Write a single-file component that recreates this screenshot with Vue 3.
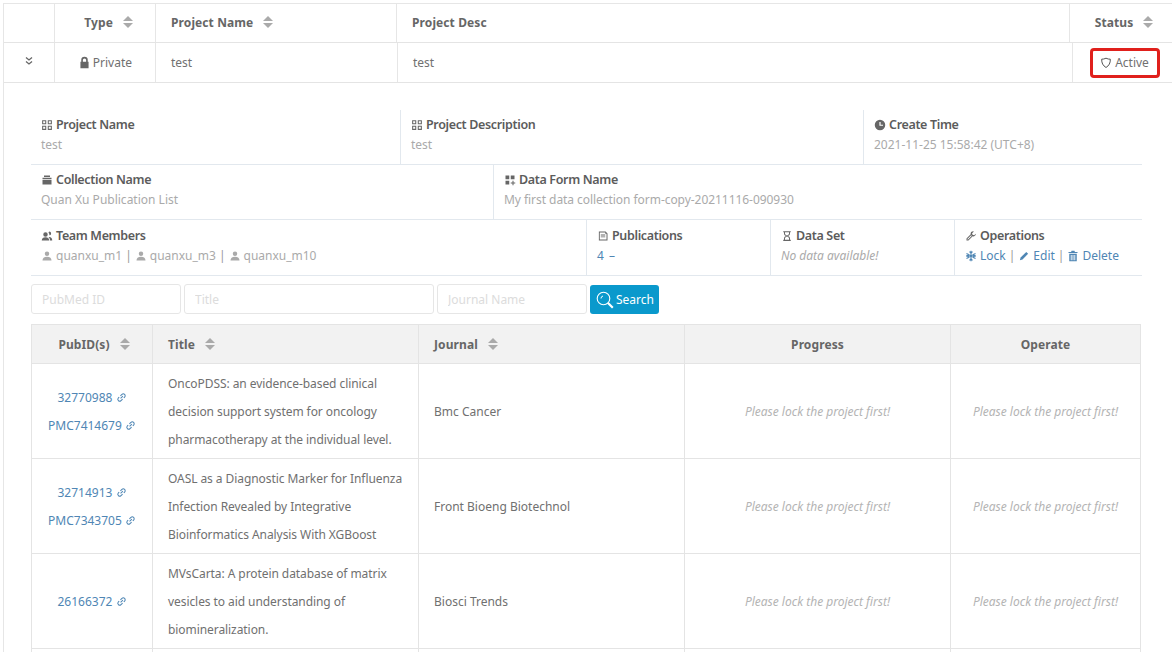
<script setup>
const icons = {
  lock: 'M4 7V5a4 4 0 0 1 8 0v2h1v8H3V7h1zm2 0h4V5a2 2 0 0 0-4 0v2z',
  grid: 'M1.500 1.500h5.500V7H1.500V1.500zm1.400 1.400v2.700h2.700V2.900H2.900zM9 1.500h5.500V7H9V1.500zm1.400 1.400v2.700h2.700V2.900h-2.700zM1.500 9H7v5.500H1.500V9zm1.400 1.400v2.700h2.700v-2.700H2.900zM9 9h5.500v5.500H9V9zm1.400 1.400v2.700h2.700v-2.700h-2.700z',
  clock: 'M8 1a7 7 0 1 1 0 14A7 7 0 0 1 8 1zM7.200 4v5H12V7.600H8.800V4H7.200z',
  box: 'M4 2h8v2H4V2zM2 5h12v2H2V5zm0 3h12v6H2V8z',
  form: 'M2 2h5v5H2V2zm7 0h5v5H9V2zM2 9h5v5H2V9zm9.300 0h1.400v2.300H15v1.400h-2.300V15h-1.400v-2.300H9v-1.400h2.300V9z',
  team: 'M6 3a3 3 0 0 1 3 3 3 3 0 0 1-6 0 3 3 0 0 1 3-3zm5-1a2.500 2.500 0 0 1 0 5 3 3 0 0 0-1-3.500A2.500 2.500 0 0 1 11 2zM1 14c0-3 2-4.500 5-4.500S11 11 11 14H1zm11 0c0-2-.7-3.500-2-4.700 3-.5 5 1 5 4.700h-3z',
  user: 'M8 2a3 3 0 0 1 3 3 3 3 0 0 1-6 0 3 3 0 0 1 3-3zM2 14c0-3 2-5 6-5s6 2 6 5H2z',
  book: 'M2.500 2h9L14 4.500V14H2.500V2zm1.200 1.200v9.600h9V5H11V3.200H3.700zM5 6h6v1.200H5V6zm0 2.500h6v1.200H5V8.500z',
  glass: 'M3 1.500h10V3h-1v2c0 1.500-1.500 2.400-2.500 3C10.500 8.600 12 9.500 12 11v2h1v1.500H3V13h1v-2c0-1.500 1.500-2.400 2.500-3C5.500 7.400 4 6.500 4 5V3H3V1.500zM5.300 3v2c0 .8 1.700 2 2.700 2.300 1-.3 2.700-1.500 2.700-2.300V3H5.300zM8 8.700c-1 .3-2.700 1.500-2.700 2.300v2h5.400v-2c0-.8-1.700-2-2.700-2.300z',
  wrench: 'M11 1.500a3.500 3.500 0 0 0-3.400 4.300L2 11.400V14h2.600l5.600-5.600A3.500 3.500 0 0 0 14.500 5l-2.300 2-2.200-.6-.6-2.200 2.300-1.900c-.2-.5-.5-.8-.7-.8zM3.200 11.900l5-5 .9.900-5 5H3.200v-.9z',
  pen: 'M11 2.500l2.500 2.500-7.500 7.500L2.500 13.500l1-3.500L11 2.500z',
  trash: 'M6 1h4l.5 1.500H14V4H2V2.500h3.500L6 1zM3 5h10v10H3V5zm2 1.500V13.500h1.200V6.500H5zm2.400 0V13.500h1.200V6.500H7.400zm2.400 0V13.500H11V6.500H9.800z',
}
const members = ['quanxu_m1', 'quanxu_m3', 'quanxu_m10']
const rows = [
  { ids: ['32770988', 'PMC7414679'], title: ['OncoPDSS: an evidence-based clinical', 'decision support system for oncology', 'pharmacotherapy at the individual level.'], journal: 'Bmc Cancer' },
  { ids: ['32714913', 'PMC7343705'], title: ['OASL as a Diagnostic Marker for Influenza', 'Infection Revealed by Integrative', 'Bioinformatics Analysis With XGBoost'], journal: 'Front Bioeng Biotechnol' },
  { ids: ['26166372'], title: ['MVsCarta: A protein database of matrix', 'vesicles to aid understanding of', 'biomineralization.'], journal: 'Biosci Trends' },
]
</script>

<template>
  <div class="page">
    <div class="outer">
      <div class="head">
        <div class="hc"></div>
        <div class="hc end"><span>Type</span><i class="sort"></i></div>
        <div class="hc"><span>Project Name</span><i class="sort"></i></div>
        <div class="hc"><span>Project Desc</span></div>
        <div class="hc center status"><span>Status</span><i class="sort"></i></div>
      </div>
      <div class="prow">
        <div class="pc center">
          <svg class="chev" viewBox="0 0 10 10"><path d="M2 1.500l3 2.500 3-2.500M2 5.500l3 2.500 3-2.500" fill="none" stroke="#666" stroke-width="1.300" /></svg>
        </div>
        <div class="pc end"><svg class="ic lockic" viewBox="0 0 16 16"><path :d="icons.lock" /></svg>&nbsp;Private</div>
        <div class="pc">test</div>
        <div class="pc">test</div>
        <div class="pc center status">
          <span class="flag">
            <svg class="shield" viewBox="0 0 12 12"><path d="M6 1.200c1.500.8 3 1 4.300 1 .2 3.800-1.300 6.500-4.300 8.300C3 8.700 1.500 6 1.700 2.200c1.300 0 2.800-.2 4.300-1z" fill="none" stroke="#555" stroke-width="1" /></svg>
            Active
          </span>
        </div>
      </div>

      <div class="detail">
        <div class="dl r1">
          <div class="dc">
            <div class="lbl"><svg class="ic" viewBox="0 0 16 16"><path :d="icons.grid" /></svg>Project Name</div>
            <div class="val">test</div>
          </div>
          <div class="dc line">
            <div class="lbl"><svg class="ic" viewBox="0 0 16 16"><path :d="icons.grid" /></svg>Project Description</div>
            <div class="val">test</div>
          </div>
          <div class="dc line">
            <div class="lbl"><svg class="ic" viewBox="0 0 16 16"><path :d="icons.clock" /></svg>Create Time</div>
            <div class="val">2021-11-25 15:58:42 (UTC+8)</div>
          </div>
        </div>
        <div class="dl r2">
          <div class="dc">
            <div class="lbl"><svg class="ic" viewBox="0 0 16 16"><path :d="icons.box" /></svg>Collection Name</div>
            <div class="val">Quan Xu Publication List</div>
          </div>
          <div class="dc line">
            <div class="lbl"><svg class="ic" viewBox="0 0 16 16"><path :d="icons.form" /></svg>Data Form Name</div>
            <div class="val tight">My first data collection form-copy-20211116-090930</div>
          </div>
        </div>
        <div class="dl r3">
          <div class="dc">
            <div class="lbl"><svg class="ic" viewBox="0 0 16 16"><path :d="icons.team" /></svg>Team Members</div>
            <div class="val members">
              <template v-for="(m, i) in members" :key="m">
                <span v-if="i" class="sep">|</span>
                <svg class="ic small" viewBox="0 0 16 16"><path :d="icons.user" /></svg>{{ m }}
              </template>
            </div>
          </div>
          <div class="dc line">
            <div class="lbl"><svg class="ic" viewBox="0 0 16 16"><path :d="icons.book" /></svg>Publications</div>
            <div class="val link">4 <span class="dash">–</span></div>
          </div>
          <div class="dc line">
            <div class="lbl"><svg class="ic" viewBox="0 0 16 16"><path :d="icons.glass" /></svg>Data Set</div>
            <div class="val nodata">No data available!</div>
          </div>
          <div class="dc line">
            <div class="lbl"><svg class="ic" viewBox="0 0 16 16"><path :d="icons.wrench" /></svg>Operations</div>
            <div class="val link ops">
              <svg class="ic small snow" viewBox="0 0 16 16"><path d="M8 1v14M2 4.500l12 7M14 4.500l-12 7M6 2.200l2 2 2-2M6 13.800l2-2 2 2M1.700 7l2.700.7-.7-2.700M14.300 9l-2.700-.7.7 2.700M14.300 7l-2.700.7.7-2.700M1.700 9l2.700-.7-.7 2.700" /></svg><span>Lock</span><span class="sep">|</span><svg class="ic small" viewBox="0 0 16 16"><path :d="icons.pen" /></svg><span>Edit</span><span class="sep">|</span><svg class="ic small" viewBox="0 0 16 16"><path :d="icons.trash" /></svg><span>Delete</span>
            </div>
          </div>
        </div>

        <div class="search">
          <input class="inp w150" placeholder="PubMed ID" />
          <input class="inp w250" placeholder="Title" />
          <input class="inp w150" placeholder="Journal Name" />
          <button class="btn">
            <svg class="mag" viewBox="0 0 18 18"><circle cx="7.500" cy="7.500" r="6.300" fill="none" stroke="#fff" stroke-width="1.100" /><path d="M5 7.500a2.500 2.500 0 0 1 2-2.500" fill="none" stroke="#fff" /><path d="M11.800 11.800l5 5" stroke="#fff" stroke-width="2.200" /></svg>Search
          </button>
        </div>

        <div class="pubs">
          <div class="pr phead">
            <div class="c center first"><span>PubID(s)</span><i class="sort"></i></div>
            <div class="c"><span>Title</span><i class="sort"></i></div>
            <div class="c"><span>Journal</span><i class="sort"></i></div>
            <div class="c center"><span>Progress</span></div>
            <div class="c center"><span>Operate</span></div>
          </div>
          <div v-for="r in rows" :key="r.ids[0]" class="pr body">
            <div class="c col center lift">
              <div v-for="id in r.ids" :key="id" class="pid">
                {{ id }}
                <svg class="chain" viewBox="0 0 12 12"><path d="M5 7l2.500-2.500M4.800 4.300L6.500 2.600a2 2 0 0 1 2.900 2.900L8.500 6.400M7.200 7.700L5.500 9.400a2 2 0 0 1-2.900-2.900L3.500 5.600" fill="none" stroke="#4f86b4" stroke-width="1.100" /></svg>
              </div>
            </div>
            <div class="c col ttl lift"><div v-for="t in r.title" :key="t">{{ t }}</div></div>
            <div class="c">{{ r.journal }}</div>
            <div class="c center hint">Please lock the project first!</div>
            <div class="c center hint">Please lock the project first!</div>
          </div>
          <div class="pr tail"><div class="c"></div><div class="c"></div><div class="c"></div><div class="c"></div><div class="c"></div></div>
        </div>
      </div>
    </div>
  </div>
</template>

<style>
html, body { margin: 0; overflow: hidden; background: #fff; }
</style>

<style scoped>
.page {
  height: 652px;
  overflow: hidden;
  box-sizing: border-box;
  padding: 3px 4px 0 3px;
  font-family: "Noto Sans", "Open Sans", sans-serif;
  font-size: 12px;
  color: #707070;
}
.outer { border-top: 1px solid #e6e6e6; border-left: 1px solid #e6e6e6; }
.head, .prow { display: grid; border-bottom: 1px solid #e4e4e4; }
.head { grid-template-columns: 51px 101px 241px 673px 1fr; height: 38px; }
.prow { grid-template-columns: 51px 101px 242px 675px 1fr; height: 39px; }
.hc, .pc { display: flex; align-items: center; padding: 0 15px; border-right: 1px solid #e6e6e6; min-width: 0; }
.hc:last-child, .pc:last-child { border-right: 0; }
.hc { font-weight: 700; color: #666; letter-spacing: 0.100px; padding-bottom: 2px; }
.pc { padding: 0 15px; }
.end { justify-content: flex-end; }
.pc.end { padding-right: 23px; }
.hc.end { padding-right: 22px; }
.center { justify-content: center; }
.hc.status { padding-left: 21px; padding-right: 15px; }
.pc.status { padding-left: 4px; padding-right: 0; }
.sort {
  position: relative;
  display: inline-block;
  width: 10px;
  height: 12px;
  margin-left: 10px;
  flex: none;
}
.sort::before, .sort::after {
  content: "";
  position: absolute;
  left: 0;
  border-left: 5px solid transparent;
  border-right: 5px solid transparent;
}
.sort::before { top: 0; border-bottom: 5px solid #aaa; }
.sort::after { bottom: 0; border-top: 5px solid #aaa; }
.chev { width: 10px; height: 10px; margin-top: -3px; }
.ic { width: 12px; height: 12px; fill: #666; margin-right: 3px; flex: none; }
.lockic { width: 13px; height: 13px; margin: 0 -1px 0 0; }
.flag {
  display: inline-flex;
  flex: none;
  align-items: center;
  justify-content: center;
  width: 70px;
  height: 30px;
  box-sizing: border-box;
  border: 3px solid #e0201c;
  border-radius: 4px;
  gap: 3px;
}
.shield { width: 12px; height: 12px; }
.detail { padding: 27px 30px 0 27px; }
.dl { display: grid; border-bottom: 1px solid #e2e8ee; width: 1111px; box-sizing: border-box; }
.r1 { grid-template-columns: 369px 463px 1fr; height: 55px; }
.r2 { grid-template-columns: 462px 1fr; height: 55px; }
.r3 { grid-template-columns: 555px 184px 184px 1fr; height: 56px; }
.dc { padding: 5px 10px 0; min-width: 0; }
.line { border-left: 1px solid #e2e8ee; }
.lbl { display: flex; align-items: center; font-weight: 600; color: #5c5c5c; font-size: 12.500px; line-height: 20px; letter-spacing: -0.350px; }
.val { color: #aaa; font-size: 12px; line-height: 20px; white-space: nowrap; }
.tight { letter-spacing: -0.050px; }
.val .ic { fill: #aaa; display: inline-block; vertical-align: -2px; }
.r3 .dc { padding-top: 6px; }
.sep { margin: 0 3px; color: #999; }
.link { color: #4f86b4; }
.link .ic { fill: #4f86b4; }
.link .snow { fill: none; stroke: #4f86b4; stroke-width: 1.500; }
.dash { margin-left: 2px; }
.nodata { font-style: italic; }
.search { display: flex; gap: 3px; margin-top: 8px; height: 30px; }
.inp {
  box-sizing: border-box;
  height: 30px;
  border: 1px solid #e6e6e6;
  border-radius: 3px;
  padding: 0 10px;
  font: 12px "Noto Sans", sans-serif;
  outline: none;
  background: #fff;
  flex: none;
}
.inp::placeholder { color: #dcdcdc; }
.w150 { width: 150px; }
.w250 { width: 250px; }
.btn {
  display: inline-flex;
  align-items: center;
  gap: 2px;
  width: 69px;
  height: 29px;
  margin-top: 1px;
  padding: 0 0 0 6px;
  background: #0a99cc;
  color: #fff;
  border: 0;
  border-radius: 3px;
  font: 12px "Noto Sans", sans-serif;
}
.mag { width: 18px; height: 18px; flex: none; }
.pubs { margin-top: 10px; width: 1110px; border: 1px solid #e4e4e4; border-bottom: 0; box-sizing: border-box; }
.pr { display: grid; grid-template-columns: 121px 266px 266px 266px 1fr; }
.c { display: flex; align-items: center; padding: 0 15px; border-right: 1px solid #e4e4e4; border-bottom: 1px solid #e4e4e4; min-width: 0; box-sizing: border-box; }
.c:last-child { border-right: 0; }
.c.first { padding-left: 19px; }
.phead { height: 39px; background: #f2f2f2; font-weight: 700; color: #666; letter-spacing: 0.100px; }
.body { height: 95px; }
.tail { height: 10px; }
.col { flex-direction: column; align-items: stretch; justify-content: center; }
.col.center { align-items: center; }
.lift { padding-top: 2px; }
.ttl { line-height: 28px; white-space: nowrap; letter-spacing: -0.070px; }
.pid { line-height: 28px; color: #4f86b4; white-space: nowrap; }
.chain { width: 11px; height: 11px; vertical-align: -1px; }
.hint { color: #b4b4b4; font-style: italic; white-space: nowrap; padding: 0; }
</style>
